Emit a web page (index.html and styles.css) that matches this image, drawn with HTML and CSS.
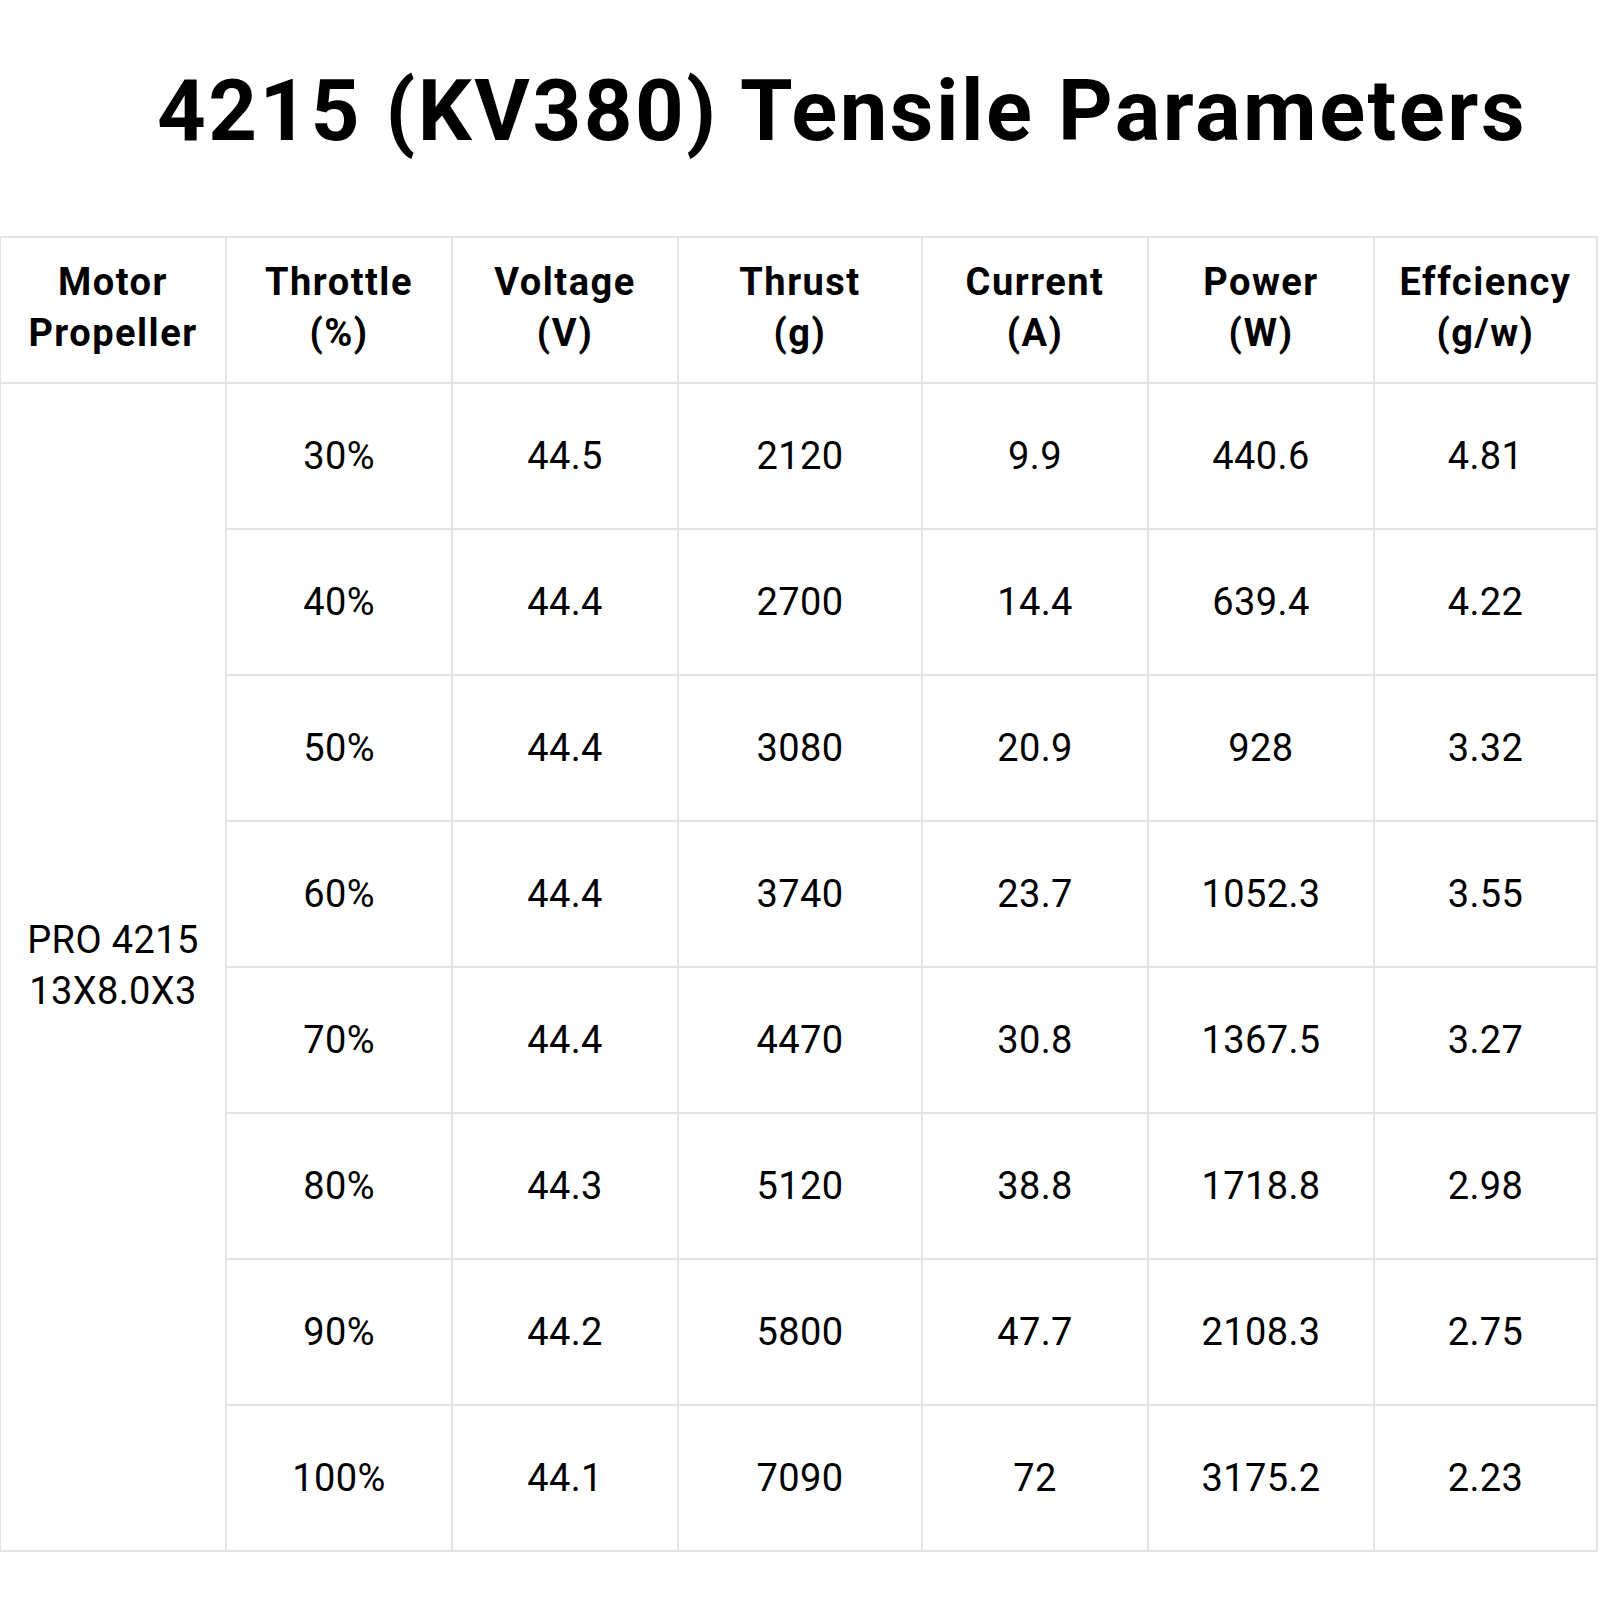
FILE: index.html
```html
<!DOCTYPE html>
<html lang="en">
<head>
<meta charset="utf-8">
<title>4215 (KV380) Tensile Parameters</title>
<link rel="stylesheet" href="styles.css">
</head>
<body>
<div class="page">
  <header class="title-bar">
    <h1 class="title">4215 (KV380) Tensile Parameters</h1>
  </header>
  <table class="params">
    <colgroup>
      <col class="c-std">
      <col class="c-std">
      <col class="c-std">
      <col class="c-wide">
      <col class="c-std">
      <col class="c-std">
      <col class="c-last">
    </colgroup>
    <thead>
      <tr>
        <th>Motor<br>Propeller</th>
        <th>Throttle<br>(%)</th>
        <th>Voltage<br>(V)</th>
        <th>Thrust<br>(g)</th>
        <th>Current<br>(A)</th>
        <th>Power<br>(W)</th>
        <th>Effciency<br>(g/w)</th>
      </tr>
    </thead>
    <tbody>
      <tr>
        <td class="model" rowspan="8">PRO 4215<br>13X8.0X3</td>
        <td>30%</td><td>44.5</td><td>2120</td><td>9.9</td><td>440.6</td><td>4.81</td>
      </tr>
      <tr><td>40%</td><td>44.4</td><td>2700</td><td>14.4</td><td>639.4</td><td>4.22</td></tr>
      <tr><td>50%</td><td>44.4</td><td>3080</td><td>20.9</td><td>928</td><td>3.32</td></tr>
      <tr><td>60%</td><td>44.4</td><td>3740</td><td>23.7</td><td>1052.3</td><td>3.55</td></tr>
      <tr><td>70%</td><td>44.4</td><td>4470</td><td>30.8</td><td>1367.5</td><td>3.27</td></tr>
      <tr><td>80%</td><td>44.3</td><td>5120</td><td>38.8</td><td>1718.8</td><td>2.98</td></tr>
      <tr><td>90%</td><td>44.2</td><td>5800</td><td>47.7</td><td>2108.3</td><td>2.75</td></tr>
      <tr><td>100%</td><td>44.1</td><td>7090</td><td>72</td><td>3175.2</td><td>2.23</td></tr>
    </tbody>
  </table>
</div>
</body>
</html>
```

FILE: styles.css
```css
html, body {
  margin: 0;
  padding: 0;
  background: #ffffff;
}

.page {
  width: 1600px;
  font-family: Roboto, "Liberation Sans", sans-serif;
  color: #000;
}

.title-bar {
  height: 236px;
  display: flex;
  align-items: flex-start;
  justify-content: center;
  padding-left: 84px;
  box-sizing: border-box;
}

.title {
  margin: 0;
  padding-top: 69px;
  font-size: 85px;
  line-height: 1;
  font-weight: 700;
  letter-spacing: 2.5px;
}

.params {
  margin-left: -1px;
  width: 1597px;
  border-collapse: collapse;
  table-layout: fixed;
}

.c-std { width: 226px; }
.c-wide { width: 244px; }
.c-last { width: 223px; }

.params th,
.params td {
  border: 2px solid #e4e4e4;
  text-align: center;
  vertical-align: middle;
  padding: 0;
  height: 144px;
}

.params th {
  font-size: 38px;
  font-weight: 700;
  line-height: 51px;
  letter-spacing: 1.5px;
  height: 139px;
  padding-bottom: 5px;
}

.params td {
  font-size: 38px;
  font-weight: 400;
  line-height: 51px;
  letter-spacing: 0.4px;
}

.params td.model {
  font-size: 38px;
  letter-spacing: 0.4px;
  padding-top: 0;
  padding-bottom: 2px;
}
```
